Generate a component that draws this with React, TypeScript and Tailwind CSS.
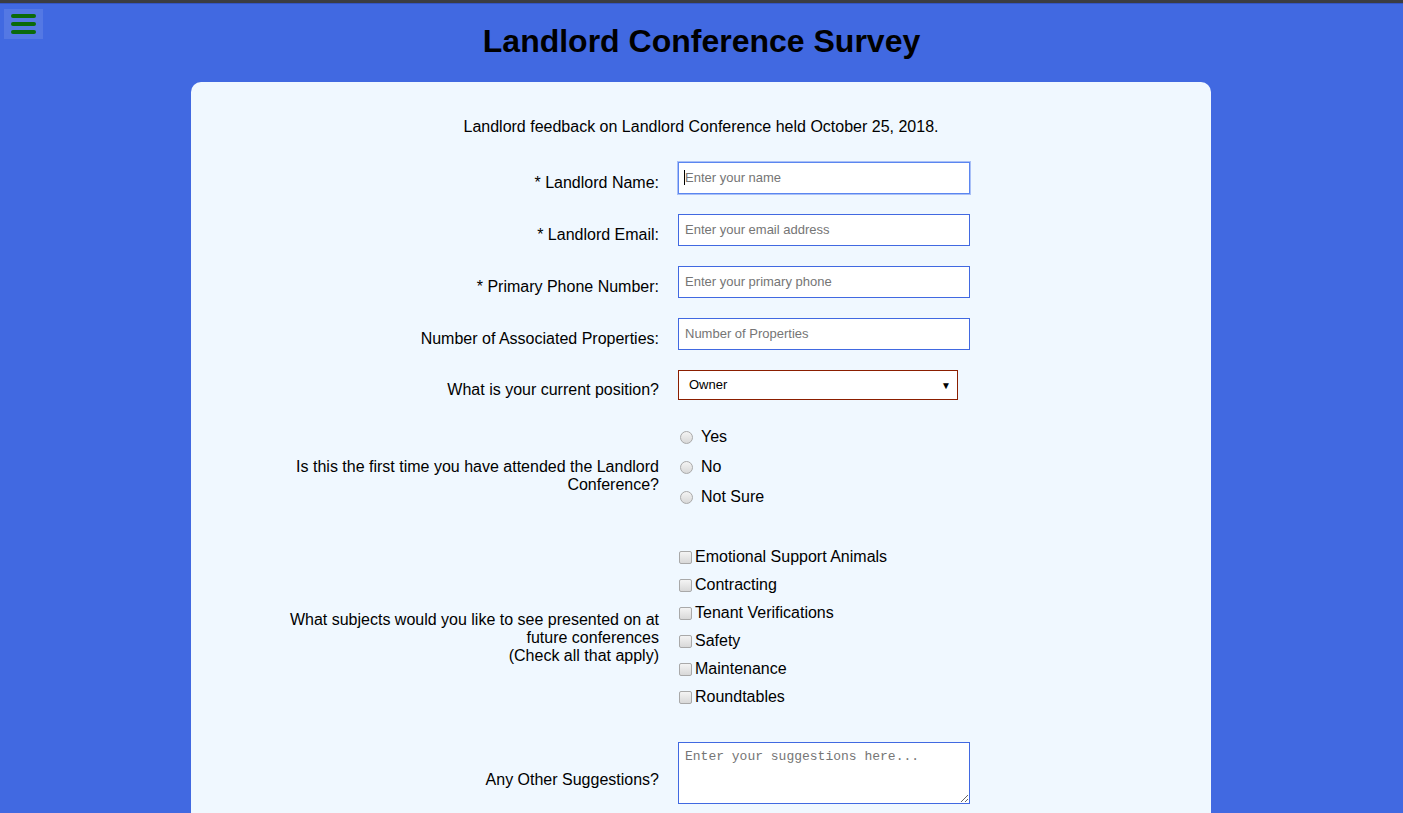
import React from "react";

const font = { fontFamily: '"Liberation Sans", Arial, sans-serif' };

const textRows = [
  { label: "* Landlord Name:", placeholder: "Enter your name", focused: true },
  { label: "* Landlord Email:", placeholder: "Enter your email address" },
  { label: "* Primary Phone Number:", placeholder: "Enter your primary phone" },
  { label: "Number of Associated Properties:", placeholder: "Number of Properties" },
];

const subjects = [
  "Emotional Support Animals",
  "Contracting",
  "Tenant Verifications",
  "Safety",
  "Maintenance",
  "Roundtables",
];

const Radio = () => (
  <span className="inline-block w-[13px] h-[13px] rounded-full border border-[#a9a9a9] bg-gradient-to-b from-[#f4f4f4] to-[#d8d8d8] shrink-0" />
);

const Check = () => (
  <span className="inline-block w-[13px] h-[13px] rounded-[2px] border border-[#a9a9a9] bg-gradient-to-b from-[#f4f4f4] to-[#d8d8d8] shrink-0" />
);

const App = () => {
  return (
    <div className="min-h-screen bg-[#4169e1] text-black relative" style={font}>
      <div className="h-[3px] bg-[#3b3d42]" />
      <div className="h-[1px] bg-[#3556c4]" />

      <button className="absolute left-[4px] top-[9px] w-[39px] h-[30px] bg-white/10 flex flex-col items-center justify-center gap-[4px]">
        <span className="block w-[25px] h-[4px] rounded-full bg-[#0b6a0b]" />
        <span className="block w-[25px] h-[4px] rounded-full bg-[#0b6a0b]" />
        <span className="block w-[25px] h-[4px] rounded-full bg-[#0b6a0b]" />
      </button>

      <h1 className="text-center text-[32px] font-bold leading-[37px] pt-[19px] pb-[22px]">
        Landlord Conference Survey
      </h1>

      <div className="w-[1020px] ml-[191px] bg-[#f0f8ff] rounded-[10px] pb-[60px]">
        <p className="text-center text-[16px] leading-[18px] pt-[36px]">
          Landlord feedback on Landlord Conference held October 25, 2018.
        </p>

        <div className="flex flex-col pl-[88px] pt-[26px]">
          {textRows.map((r, i) => (
            <div key={i} className="flex items-start gap-[19px] mb-[20px]">
              <label className="w-[380px] text-right text-[16px] leading-[18px] pt-[12px]">
                {r.label}
              </label>
              <div className="relative">
                <input
                  type="text"
                  placeholder={r.placeholder}
                  className={`w-[292px] h-[32px] bg-white px-[6px] pb-[2px] text-[13px] placeholder:text-[#757575] outline-none border ${
                    r.focused
                      ? "border-[#5b86f0] shadow-[0_0_0_1px_#a9c0f7]"
                      : "border-[#4169e1]"
                  }`}
                  style={font}
                />
                {r.focused && (
                  <span className="absolute left-[6px] top-[8px] w-[1px] h-[15px] bg-black" />
                )}
              </div>
            </div>
          ))}

          <div className="flex items-start gap-[19px]">
            <label className="w-[380px] text-right text-[16px] leading-[18px] pt-[11px]">
              What is your current position?
            </label>
            <div className="w-[280px] h-[30px] bg-white border border-[#8b1e00] flex items-center justify-between pl-[10px] pr-[6px] text-[13px]">
              <span>Owner</span>
              <span className="text-[10px]">▼</span>
            </div>
          </div>

          <div className="flex items-start gap-[19px] mt-[28px]">
            <label className="w-[380px] text-right text-[16px] leading-[18px] pt-[30px]">
              Is this the first time you have attended the Landlord Conference?
            </label>
            <div className="flex flex-col gap-[12px] pl-[2px]">
              {["Yes", "No", "Not Sure"].map((o) => (
                <div key={o} className="flex items-center gap-[8px] h-[18px] text-[16px]">
                  <Radio />
                  <span>{o}</span>
                </div>
              ))}
            </div>
          </div>

          <div className="flex items-start gap-[19px] mt-[42px]">
            <label className="w-[380px] text-right text-[16px] leading-[18px] pt-[63px]">
              What subjects would you like to see presented on at future conferences
              <br />
              (Check all that apply)
            </label>
            <div className="flex flex-col gap-[10px] pl-[1px]">
              {subjects.map((s) => (
                <div key={s} className="flex items-center gap-[3px] h-[18px] text-[16px]">
                  <Check />
                  <span>{s}</span>
                </div>
              ))}
            </div>
          </div>

          <div className="flex items-start gap-[19px] mt-[36px]">
            <label className="w-[380px] text-right text-[16px] leading-[18px] pt-[29px]">
              Any Other Suggestions?
            </label>
            <textarea
              placeholder="Enter your suggestions here..."
              className="w-[292px] h-[62px] bg-white border border-[#4169e1] px-[6px] py-[4px] text-[13px] placeholder:text-[#757575] outline-none"
              style={{ fontFamily: '"Liberation Mono", "DejaVu Sans Mono", monospace' }}
            />
          </div>
        </div>
      </div>
    </div>
  );
};

export default App;
